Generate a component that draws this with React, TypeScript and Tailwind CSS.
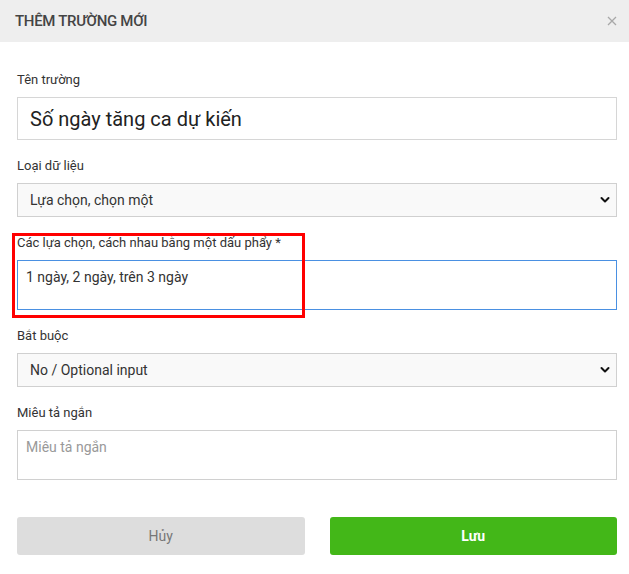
import React from 'react';

const Chevron = () => (
  <svg
    className="pointer-events-none absolute right-[7px] top-1/2 -translate-y-1/2"
    width="10"
    height="7"
    viewBox="0 0 10 7"
    fill="none"
  >
    <path d="M1.5 1.5 L5 5 L8.5 1.5" stroke="#111" strokeWidth="2" strokeLinecap="round" strokeLinejoin="round" />
  </svg>
);

const Label = ({ children }: { children: React.ReactNode }) => (
  <label className="block h-[18px] mb-2 text-[13px] leading-[18px] text-[#333]">{children}</label>
);

export default function App() {
  return (
    <div className="w-[629px] h-[574px] bg-white font-['Roboto','Liberation_Sans',sans-serif] text-[#333]">
      {/* header */}
      <div className="h-[42px] bg-[#eeeeee] flex items-center justify-between pl-[15px] pr-[12px]">
        <h2 className="text-[15px] font-medium text-[#444] tracking-[-0.3px]">THÊM TRƯỜNG MỚI</h2>
        <button className="text-[#aaa]">
          <svg width="10" height="10" viewBox="0 0 10 10">
            <path d="M1 1 L9 9 M9 1 L1 9" stroke="#a8a8a8" strokeWidth="1.3" />
          </svg>
        </button>
      </div>

      <div className="pl-[17px] pr-[12px] pt-[29px] flex flex-col gap-[17px]">
        <div>
          <Label>Tên trường</Label>
          <input
            defaultValue="Số ngày tăng ca dự kiến"
            className="w-full h-[43px] border border-[#d6d6d6] px-[12px] text-[20px] text-[#222] outline-none"
          />
        </div>

        <div>
          <Label>Loại dữ liệu</Label>
          <div className="relative">
            <select className="appearance-none w-full h-[34px] bg-[#f9f9f9] border border-[#d0d0d0] pl-[12px] text-[14px] text-[#333] outline-none">
              <option>Lựa chọn, chọn một</option>
            </select>
            <Chevron />
          </div>
        </div>

        <div className="relative">
          <Label>Các lựa chọn, cách nhau bằng một dấu phẩy *</Label>
          <textarea
            defaultValue="1 ngày, 2 ngày, trên 3 ngày"
            className="block w-full h-[50px] border border-[#4a90e2] px-[8px] pt-[6px] text-[14px] text-[#333] outline-none resize-none"
          />
          <div className="absolute -left-[5px] -top-[1px] w-[293px] h-[85px] border-[3px] border-[#ff0000] pointer-events-none" />
        </div>

        <div>
          <Label>Bắt buộc</Label>
          <div className="relative">
            <select className="appearance-none w-full h-[34px] bg-[#f9f9f9] border border-[#d0d0d0] pl-[12px] text-[14px] text-[#333] outline-none">
              <option>No / Optional input</option>
            </select>
            <Chevron />
          </div>
        </div>

        <div>
          <Label>Miêu tả ngắn</Label>
          <textarea
            placeholder="Miêu tả ngắn"
            className="block w-full h-[50px] border border-[#d0d0d0] px-[8px] pt-[6px] text-[14px] text-[#333] placeholder:text-[#999] outline-none resize-none"
          />
        </div>

        <div className="flex gap-[25px] mt-[20px]">
          <button className="flex-1 h-[38px] rounded-[3px] bg-[#dddddd] text-[14px] text-[#777]">Hủy</button>
          <button className="flex-1 h-[38px] rounded-[3px] bg-[#43b718] text-[14px] font-bold text-white">Lưu</button>
        </div>
      </div>
    </div>
  );
}
